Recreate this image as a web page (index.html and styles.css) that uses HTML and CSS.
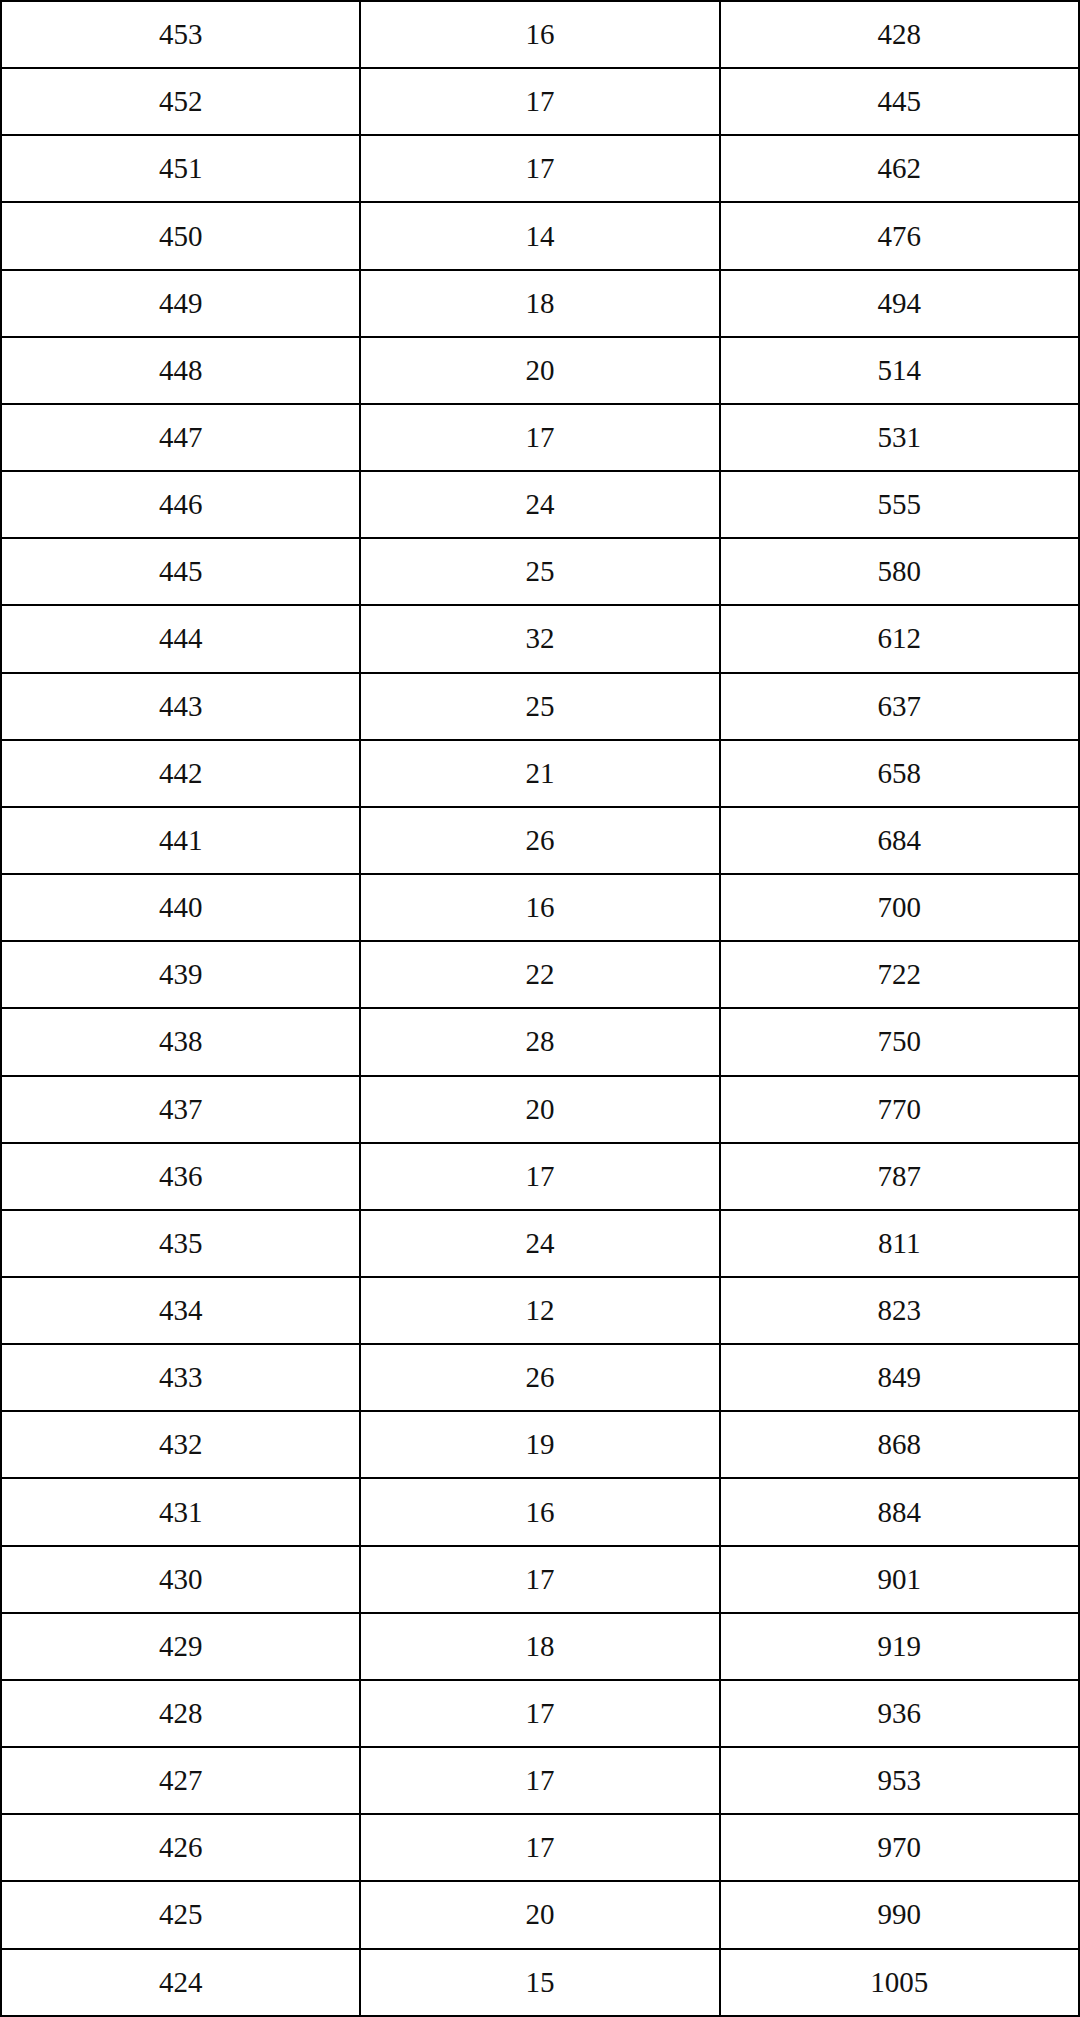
FILE: index.html
```html
<!DOCTYPE html>
<html>
<head>
<meta charset="utf-8">
<link rel="stylesheet" href="styles.css">
</head>
<body>
<table class="score-table">
<tbody>
<tr><td>453</td><td>16</td><td>428</td></tr>
<tr><td>452</td><td>17</td><td>445</td></tr>
<tr><td>451</td><td>17</td><td>462</td></tr>
<tr><td>450</td><td>14</td><td>476</td></tr>
<tr><td>449</td><td>18</td><td>494</td></tr>
<tr><td>448</td><td>20</td><td>514</td></tr>
<tr><td>447</td><td>17</td><td>531</td></tr>
<tr><td>446</td><td>24</td><td>555</td></tr>
<tr><td>445</td><td>25</td><td>580</td></tr>
<tr><td>444</td><td>32</td><td>612</td></tr>
<tr><td>443</td><td>25</td><td>637</td></tr>
<tr><td>442</td><td>21</td><td>658</td></tr>
<tr><td>441</td><td>26</td><td>684</td></tr>
<tr><td>440</td><td>16</td><td>700</td></tr>
<tr><td>439</td><td>22</td><td>722</td></tr>
<tr><td>438</td><td>28</td><td>750</td></tr>
<tr><td>437</td><td>20</td><td>770</td></tr>
<tr><td>436</td><td>17</td><td>787</td></tr>
<tr><td>435</td><td>24</td><td>811</td></tr>
<tr><td>434</td><td>12</td><td>823</td></tr>
<tr><td>433</td><td>26</td><td>849</td></tr>
<tr><td>432</td><td>19</td><td>868</td></tr>
<tr><td>431</td><td>16</td><td>884</td></tr>
<tr><td>430</td><td>17</td><td>901</td></tr>
<tr><td>429</td><td>18</td><td>919</td></tr>
<tr><td>428</td><td>17</td><td>936</td></tr>
<tr><td>427</td><td>17</td><td>953</td></tr>
<tr><td>426</td><td>17</td><td>970</td></tr>
<tr><td>425</td><td>20</td><td>990</td></tr>
<tr><td>424</td><td>15</td><td>1005</td></tr>
</tbody>
</table>
</body>
</html>
```

FILE: styles.css
```css
html, body {
  margin: 0;
  padding: 0;
  background: #fff;
}
.score-table {
  width: 1080px;
  height: 2017px;
  border-collapse: collapse;
  table-layout: fixed;
  font-family: "Liberation Serif", "DejaVu Serif", serif;
  font-size: 29px;
  color: #111;
}
.score-table td {
  border: 2px solid #000;
  text-align: center;
  vertical-align: middle;
  padding: 0;
  height: 10px;
  line-height: 1;
}
```
